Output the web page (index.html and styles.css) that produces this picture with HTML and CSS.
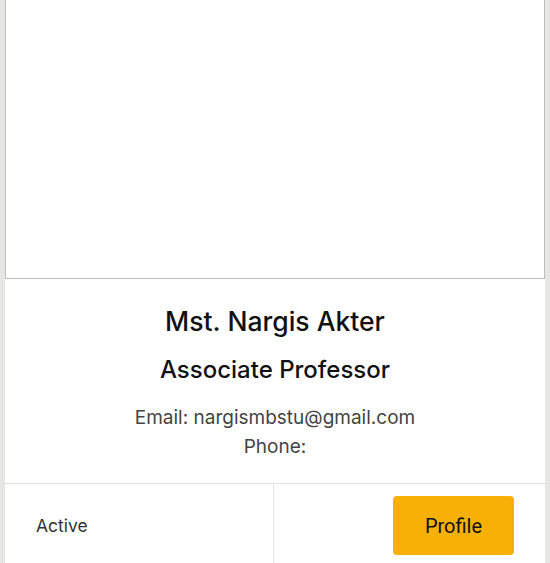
FILE: index.html
```html
<!DOCTYPE html>
<html>
<head>
<meta charset="utf-8">
<link rel="stylesheet" href="styles.css">
</head>
<body>
<div class="card">
  <div class="photo"></div>
  <div class="info">
    <h2 class="name">Mst. Nargis Akter</h2>
    <h3 class="role">Associate Professor</h3>
    <p class="contact">Email: nargismbstu@gmail.com<br>Phone:</p>
  </div>
  <div class="footer">
    <div class="status">Active</div>
    <div class="action"><a class="btn">Profile</a></div>
  </div>
</div>
</body>
</html>
```
FILE: styles.css
```css
html, body {
  margin: 0;
  padding: 0;
  background: #e6e6e4;
  overflow: hidden;
}
body {
  font-family: "Inter", "Noto Sans", sans-serif;
}
.card {
  margin: 0 5px;
  background: #fff;
  height: 600px;
}
.photo {
  height: 278px;
  border: 1px solid #bdbdbd;
  border-top: none;
  background: #fff;
}
.info {
  text-align: center;
  padding-top: 26px;
  height: 178px;
}
.name {
  margin: 0;
  font-size: 26.5px;
  font-weight: 500;
  line-height: 32px;
  color: #111;
}
.role {
  margin: 18px 0 0;
  font-size: 24px;
  font-weight: 500;
  line-height: 30px;
  color: #111;
}
.contact {
  margin: 18px 0 0;
  font-size: 19px;
  line-height: 29px;
  color: #444;
}
.footer {
  display: flex;
  border-top: 1px solid #e3e3e3;
}
.status {
  width: 269px;
  border-right: 1px solid #e3e3e3;
  padding: 31px 0 0 31px;
  box-sizing: border-box;
  font-size: 17.5px;
  color: #333;
  height: 100px;
}
.action {
  flex: 1;
  display: flex;
  justify-content: flex-end;
  padding: 12px 31px 0 0;
}
.btn {
  display: flex;
  align-items: center;
  justify-content: center;
  width: 121px;
  height: 59px;
  background: #f7b006;
  border-radius: 4px;
  font-family: "Roboto", sans-serif;
  font-size: 20px;
  color: #111;
}
```
